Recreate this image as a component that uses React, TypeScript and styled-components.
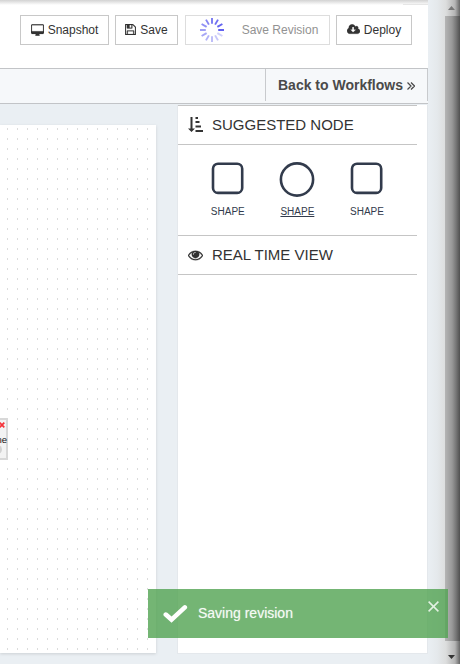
import React from "react";
import styled, { createGlobalStyle } from "styled-components";

const GlobalStyle = createGlobalStyle`
  * { box-sizing: border-box; }
  body { margin: 0; overflow: hidden; background: #eaeff3; font-family: "Liberation Sans", Arial, sans-serif; color: #333; }
`;

const Screen = styled.div`
  position: relative;
  width: 460px;
  height: 664px;
  overflow: hidden;
  display: flex;
  background: #eaeff3;
`;
const Page = styled.div`
  width: 428px;
  flex: none;
  display: flex;
  flex-direction: column;
`;
const TopShade = styled.div`
  position: absolute;
  inset: 0 0 auto 0;
  height: 5px;
  background: linear-gradient(#d2d2d2, #e4e4e4 40%, rgba(255, 255, 255, 0));
`;
const TabEdge = styled.div`
  position: absolute;
  left: 403px;
  top: 4px;
  width: 25px;
  height: 1px;
  background: #e6e6e6;
`;
const Toolbar = styled.header`
  height: 68px;
  flex: none;
  display: flex;
  align-items: flex-start;
  background: #fff;
  padding: 15px 0 0 20px;
`;
const ToolButton = styled.button<{ $w: number; $gap: number; $muted?: boolean }>`
  width: ${(p) => p.$w}px;
  height: 30px;
  margin: 0 ${(p) => p.$gap}px 0 0;
  padding: 0 0 1px ${(p) => (p.$muted ? 2 : 0)}px;
  display: flex;
  align-items: center;
  justify-content: center;
  background: #fff;
  border: 1px solid ${(p) => (p.$muted ? "#ddd" : "#c8c8c8")};
  color: ${(p) => (p.$muted ? "#929292" : "#333")};
  font: 12px "Liberation Sans", Arial, sans-serif;
  white-space: nowrap;
  svg { flex: none; margin-right: ${(p) => (p.$muted ? 17 : 4)}px; }
`;
const NavBar = styled.nav`
  height: 36px;
  flex: none;
  display: flex;
  justify-content: flex-end;
  background: #f6f8fa;
  border-top: 1px solid #c2c4c7;
  border-bottom: 1px solid #c2c4c7;
`;
const BackLink = styled.a`
  width: 163px;
  height: 32px;
  display: flex;
  align-items: center;
  padding-left: 12px;
  border: solid #c8cacd;
  border-width: 0 1px;
  font-size: 14px;
  font-weight: bold;
  color: #4a4a4a;
  white-space: nowrap;
  svg { margin: 1px 0 0 4px; }
`;
const Workspace = styled.main`
  flex: 1;
  display: flex;
  align-items: flex-start;
`;
const Canvas = styled.section`
  width: 156px;
  height: 528px;
  margin: 21px 21px 0 0;
  flex: none;
  position: relative;
  background: #fff;
  box-shadow: 0 1px 3px rgba(0, 0, 0, 0.13);
`;
const DotGrid = styled.svg`
  display: block;
`;
const FlowNode = styled.div`
  position: absolute;
  left: 0;
  top: 293px;
  width: 8px;
  height: 42px;
  padding-top: 14px;
  display: flex;
  justify-content: flex-end;
  border: 2px solid #d8d8d8;
  border-left: 0;
  background: #f3f3f3;
  color: #111;
  font-size: 9.5px;
  line-height: 12px;
`;
const NodeName = styled.span`
  margin-right: -1px;
`;
const NodeClose = styled.svg`
  position: absolute;
  left: -1px;
  top: 2px;
`;
const NodePort = styled.i`
  position: absolute;
  left: -7px;
  bottom: 4px;
  width: 9px;
  height: 9px;
  border-radius: 5px;
  background: #d2d2d2;
`;
const SidePanel = styled.aside`
  width: 251px;
  height: 549px;
  margin-top: 1px;
  flex: none;
  background: #fff;
  border: solid #e4e8ec;
  border-width: 0 1px 1px;
`;
const PanelHeading = styled.h2`
  width: 239px;
  height: 40px;
  margin: 0;
  padding-left: 10px;
  display: flex;
  align-items: center;
  border: solid #c5c5c5;
  border-width: 1px 0;
  font-size: 15px;
  font-weight: normal;
  color: #333;
  white-space: nowrap;
  svg { flex: none; margin-right: 9px; }
`;
const HeadingText = styled.span`
  padding-bottom: 2px;
`;
const Shapes = styled.div`
  height: 90px;
  display: flex;
  padding: 16px 0 0 15px;
`;
const ShapeItem = styled.div<{ $active?: boolean }>`
  width: 69.6px;
  display: flex;
  flex-direction: column;
  align-items: center;
  font-size: 10px;
  line-height: 12px;
  color: #323b4c;
  text-decoration: ${(p) => (p.$active ? "underline" : "none")};
  svg { margin-bottom: 9px; }
`;
const Scrollbar = styled.div`
  position: absolute;
  right: 0;
  top: 0;
  width: 32px;
  height: 100%;
  display: flex;
  justify-content: flex-end;
  background: linear-gradient(90deg, #eaeff3, #e5e9ec 9px, #dcdddd 18px, #b4b4b4 27px, #666 32px);
`;
const Arrow = styled.svg<{ $y: number; $x: number }>`
  position: absolute;
  left: ${(p) => p.$x}px;
  top: ${(p) => p.$y}px;
`;
const Thumb = styled.div`
  width: 15px;
  height: 625px;
  margin-top: 16px;
  background: linear-gradient(90deg, #b5b5b5, #999 7px, #777 11px, #505050 15px);
`;
const Toast = styled.div`
  position: absolute;
  left: 148px;
  top: 589px;
  width: 300px;
  height: 49px;
  display: flex;
  align-items: center;
  padding-left: 15px;
  background: rgba(81, 163, 81, 0.8);
  color: rgba(255, 255, 255, 0.88);
  font-size: 14px;
  text-shadow: 0 0 1px rgba(255, 255, 255, 0.6);
`;
const ToastText = styled.span`
  margin-left: 10px;
  padding-bottom: 2px;
  white-space: nowrap;
`;
const ToastClose = styled.svg`
  position: absolute;
  right: 9px;
  top: 12px;
`;

const glyphs = {
  desktop: "M1728 992v-832q0-13-9.5-22.5t-22.5-9.5h-1600q-13 0-22.5 9.5t-9.5 22.5v832q0 13 9.5 22.5t22.5 9.5h1600q13 0 22.5-9.5t9.5-22.5zm128-832v1088q0 66-47 113t-113 47h-544q0 37 16 77.5t32 71 16 43.5q0 26-19 45t-45 19h-512q-26 0-45-19t-19-45q0-14 16-44t32-70 16-78h-544q-66 0-113-47t-47-113v-1088q0-66 47-113t113-47h1600q66 0 113 47t47 113z",
  floppy: "M512 1536h768v-384h-768v384zm896 0h128v-896q0-14-10-38.5t-20-34.5l-281-281q-10-10-34-20t-39-10v416q0 40-28 68t-68 28h-576q-40 0-68-28t-28-68v-416h-128v1280h128v-416q0-40 28-68t68-28h832q40 0 68 28t28 68v416zm-384-928v-320q0-13-9.5-22.5t-22.5-9.5h-192q-13 0-22.5 9.5t-9.5 22.5v320q0 13 9.5 22.5t22.5 9.5h192q13 0 22.5-9.5t9.5-22.5zm640 32v928q0 40-28 68t-68 28h-1344q-40 0-68-28t-28-68v-1344q0-40 28-68t68-28h928q40 0 88 20t76 48l280 280q28 28 48 76t20 88z",
  cloud: "M1216 928q0-14-9-23t-23-9h-224v-352q0-13-9.5-22.5t-22.5-9.5h-192q-13 0-22.5 9.5t-9.5 22.5v352h-224q-13 0-22.5 9.5t-9.5 22.5q0 14 9 23l352 352q9 9 23 9t23-9l351-351q10-12 10-24zm640 224q0 159-112.5 271.5t-271.5 112.5h-1088q-185 0-316.5-131.5t-131.5-316.5q0-130 70-240t188-165q-2-30-2-43 0-212 150-362t362-150q156 0 285.5 87t188.5 231q71-62 166-62 106 0 181 75t75 181q0 76-41 138 130 31 213.5 135.5t83.5 238.5z",
  eye: "M1664 960q-152-236-381-353 61 104 61 225 0 185-131.5 316.5t-316.5 131.5-316.5-131.5-131.5-316.5q0-121 61-225-229 117-381 353 133 205 333.5 326.5t434.5 121.5 434.5-121.5 333.5-326.5zm-720-384q0-20-14-34t-34-14q-125 0-214.5 89.5t-89.5 214.5q0 20 14 34t34 14 34-14 14-34q0-86 61-147t147-61q20 0 34-14t14-34zm848 384q0 34-20 69-140 230-376.5 368.5t-499.5 138.5-499.5-139-376.5-368q-20-35-20-69t20-69q140-229 376.5-368t499.5-139 499.5 139 376.5 368q20 35 20 69z",
};

const Glyph = ({ name, box, w, h }: { name: keyof typeof glyphs; box: string; w: number; h: number }) => (
  <svg width={w} height={h} viewBox={box} fill="#333" stroke="#333" strokeWidth="30"><path d={glyphs[name]} /></svg>
);

const Spinner = () => (
  <svg width="26" height="26" viewBox="-13 -13 26 26">
    {Array.from({ length: 12 }, (_, i) => (
      <line key={i} x1="6.2" y1="0" x2="12" y2="0" stroke="#5a5af0" strokeWidth="1.9"
        opacity={1 - ((12 - i) % 12) * 0.066} transform={`rotate(${i * 30})`} />
    ))}
  </svg>
);

const SortIcon = () => (
  <svg width="15" height="16" viewBox="0 0 15 16" fill="#333">
    <path d="M2.500 0h2v11.500H7L3.500 15 0 11.500h2.500z" />
    <path d="M7.500 0h2.500v2H7.500zM7.500 4h4v2h-4zM7.500 8.500h5.500v2H7.500zM7.500 13H15v2H7.500z" />
  </svg>
);

const Shape = ({ round, active }: { round?: boolean; active?: boolean }) => (
  <ShapeItem $active={active}>
    <svg width="36" height="36" viewBox="0 0 36 36" fill="none" stroke="#323b4c" strokeWidth="2.6">
      {round ? <circle cx="18" cy="18.500" r="16.100" /> : <rect x="3" y="2.700" width="29.200" height="29.200" rx="5" />}
    </svg>
    SHAPE
  </ShapeItem>
);

const dots = Array.from({ length: 53 * 15 }, (_, i) => ({ x: 7 + (i % 15) * 10, y: 3 + Math.floor(i / 15) * 10 }));

export default function App() {
  return (
    <>
      <GlobalStyle />
      <Screen>
        <Page>
          <Toolbar>
            <ToolButton $w={89} $gap={6}><Glyph name="desktop" box="-64 0 1920 1664" w={13} h={12} />Snapshot</ToolButton>
            <ToolButton $w={63} $gap={7}><Glyph name="floppy" box="128 128 1536 1536" w={11} h={11} />Save</ToolButton>
            <ToolButton $w={145} $gap={6} $muted><Spinner />Save Revision</ToolButton>
            <ToolButton $w={76} $gap={0}><Glyph name="cloud" box="-64 128 1920 1536" w={13} h={11} />Deploy</ToolButton>
          </Toolbar>
          <NavBar>
            <BackLink>
              Back to Workflows
              <svg width="8" height="8" viewBox="0 0 8 8" fill="none" stroke="#4a4a4a" strokeWidth="1.250"><path d="M.5.5 4 4 .5 7.500M4 .5 7.500 4 4 7.500" /></svg>
            </BackLink>
          </NavBar>
          <Workspace>
            <Canvas>
              <DotGrid width="156" height="528" fill="#dcdcdc">
                {dots.map((d) => <rect key={`${d.x}-${d.y}`} x={d.x} y={d.y} width="1" height="2" />)}
              </DotGrid>
              <FlowNode>
                <NodeName>ne</NodeName>
                <NodeClose width="6" height="6" viewBox="0 0 6 6" stroke="#f5333a" strokeWidth="1.700"><path d="M.7.7l4.600 4.600M5.300.7.7 5.300" /></NodeClose>
                <NodePort />
              </FlowNode>
            </Canvas>
            <SidePanel>
              <PanelHeading><SortIcon /><HeadingText>SUGGESTED NODE</HeadingText></PanelHeading>
              <Shapes><Shape /><Shape round active /><Shape /></Shapes>
              <PanelHeading><Glyph name="eye" box="0 64 1792 1792" w={15} h={15} /><HeadingText>REAL TIME VIEW</HeadingText></PanelHeading>
            </SidePanel>
          </Workspace>
        </Page>
        <TopShade />
        <TabEdge />
        <Scrollbar>
          <Thumb />
          <Arrow $x={20} $y={6} width="7" height="4" viewBox="0 0 7 4" fill="#777"><path d="M3.500 0 7 4H0z" /></Arrow>
          <Arrow $x={20} $y={655} width="7" height="4" viewBox="0 0 7 4" fill="#333"><path d="M3.500 4 7 0H0z" /></Arrow>
        </Scrollbar>
        <Toast>
          <svg width="25" height="19" viewBox="0 0 25 19" fill="none" stroke="#fff" strokeWidth="4.600" strokeLinecap="round" strokeLinejoin="miter"><path d="M2.800 10.600 8.500 15.600 21.800 3.400" /></svg>
          <ToastText>Saving revision</ToastText>
          <ToastClose width="11" height="11" viewBox="0 0 11 11" stroke="#e3f1e3" strokeWidth="1.500"><path d="M.6.6l9.800 9.800M10.400.6.6 10.400" /></ToastClose>
        </Toast>
      </Screen>
    </>
  );
}
